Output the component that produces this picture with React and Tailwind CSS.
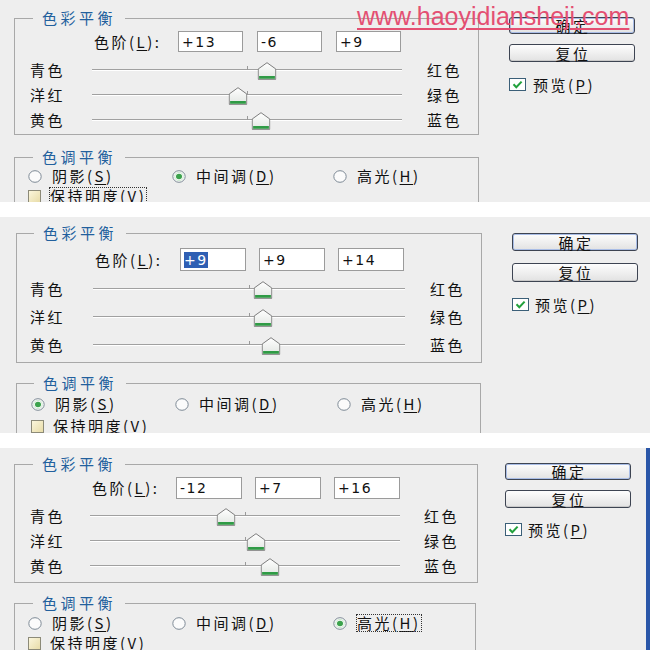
import React from "react";

const P1 = {
  h: "h-[202px]",
  colW: "w-[482px]",
  colPl: "pl-[14px]",
  g1: "mt-[10px] w-[465px] pb-[2px]",
  lgMl: "ml-[18px]",
  lvl: "mt-[5px] pl-[79px]",
  lblW: "w-[84px]",
  inCls: "w-[65px] h-[21px]",
  inGap: "gap-[14px]",
  rows: "mt-[5px]",
  rowH: "h-[25px]",
  rowPl: "pl-[15px]",
  lw: "w-[62px]",
  tw: "w-[310px]",
  rml: "ml-[25px]",
  g2: "mt-[14px] w-[465px]",
  radioH: "h-[22px]",
  radioPl: "pl-[13px]",
  r1w: "w-[144px]",
  r2w: "w-[161px]",
  keep: "mt-[1px]",
  btnPl: "pl-[27px]",
  b1: "mt-[17px] h-[17px]",
  b2: "mt-[10px] h-[18px]",
  pv: "mt-[16px]",
  pvMl: "ml-[7px]",
};

const P2 = {
  h: "h-[216px]",
  colW: "w-[484px]",
  colPl: "pl-[16px]",
  g1: "mt-[8px] w-[466px] pb-[3px]",
  lgMl: "ml-[17px]",
  lvl: "mt-[7px] pl-[78px]",
  lblW: "w-[85px]",
  inCls: "w-[66px] h-[23px]",
  inGap: "gap-[13px]",
  rows: "mt-[4px]",
  rowH: "h-[28px]",
  rowPl: "pl-[13px]",
  lw: "w-[63px]",
  tw: "w-[312px]",
  rml: "ml-[25px]",
  g2: "mt-[12px] w-[465px]",
  radioH: "h-[26px]",
  radioPl: "pl-[14px]",
  r1w: "w-[144px]",
  r2w: "w-[162px]",
  keep: "mt-[1px]",
  btnPl: "pl-[28px]",
  b1: "mt-[16px] h-[18px]",
  b2: "mt-[12px] h-[19px]",
  pv: "mt-[16px]",
  pvMl: "ml-[6px]",
};

const P3 = {
  h: "h-[202px]",
  colW: "w-[482px]",
  colPl: "pl-[14px]",
  g1: "mt-[8px] w-[464px] pb-[4px]",
  lgMl: "ml-[18px]",
  lvl: "mt-[5px] pl-[77px]",
  lblW: "w-[84px]",
  inCls: "w-[66px] h-[22px]",
  inGap: "gap-[13px]",
  rows: "mt-[4px]",
  rowH: "h-[25px]",
  rowPl: "pl-[15px]",
  lw: "w-[60px]",
  tw: "w-[310px]",
  rml: "ml-[24px]",
  g2: "mt-[12px] w-[462px]",
  radioH: "h-[24px]",
  radioPl: "pl-[13px]",
  r1w: "w-[144px]",
  r2w: "w-[161px]",
  keep: "mt-[0px]",
  btnPl: "pl-[23px]",
  b1: "mt-[15px] h-[17px]",
  b2: "mt-[10px] h-[18px]",
  pv: "mt-[15px]",
  pvMl: "ml-[6px]",
};

function U({ c }) {
  return <span className="underline decoration-1 underline-offset-[2px]">{c}</span>;
}

function Thumb() {
  return (
    <svg width="19" height="18" viewBox="0 0 19 18">
      <defs>
        <linearGradient id="thumbg" x1="0" y1="0" x2="0" y2="1">
          <stop offset="0" stopColor="#ffffff" />
          <stop offset="1" stopColor="#e2e6e2" />
        </linearGradient>
      </defs>
      <path d="M9.5 0.7 L18.3 7 L18.3 17.3 L0.7 17.3 L0.7 7 Z" fill="url(#thumbg)" stroke="#7d7d7d" strokeWidth="1" />
      <path d="M1.6 15.4 H17.4" stroke="#2f9b45" strokeWidth="2.6" />
    </svg>
  );
}

function Radio({ checked }) {
  return (
    <svg width="14" height="13" viewBox="0 0 14 13" className="shrink-0">
      <ellipse cx="7" cy="6.5" rx="6.2" ry="5.8" fill="#fbfbfb" stroke="#7e8a96" strokeWidth="1" />
      {checked && <ellipse cx="7" cy="6.5" rx="3" ry="2.8" fill="#3ba24c" />}
      {checked && <ellipse cx="7" cy="6.5" rx="4.2" ry="4" fill="none" stroke="#bfe3c4" strokeWidth="0.8" />}
    </svg>
  );
}

function Check() {
  return (
    <svg width="17" height="13" viewBox="0 0 17 13" className="shrink-0">
      <rect x="0.5" y="0.5" width="16" height="12" fill="#ffffff" stroke="#3b5f78" />
      <path d="M4.5 6.3 L7.3 9.2 L12.6 3.6" fill="none" stroke="#22a13c" strokeWidth="2" />
    </svg>
  );
}

function Field({ v, cls, sel }) {
  return (
    <div
      className={`${cls} bg-white border border-[#9b9b9b] flex items-center pl-[3px] font-['DejaVu_Sans',sans-serif] text-[14px] leading-[16px] tracking-[1.5px] text-[#111111]`}
    >
      {sel ? <span className="bg-[#2f5fb3] text-white">{v}</span> : v}
    </div>
  );
}

function Btn({ children, cls, def }) {
  return (
    <div
      className={`${cls} w-[126px] shrink-0 rounded-[3px] border border-[#3d4452] bg-linear-to-b from-[#fdfdfd] to-[#e2e2e2] flex items-center justify-center text-[15px] leading-none tracking-[2.5px] pl-[2px] ${
        def ? "shadow-[inset_0_0_0_1px_#a9bde6]" : "shadow-[inset_0_-1px_0_#c9c9c9]"
      }`}
    >
      {children}
    </div>
  );
}

function SliderRow({ c, left, right, value }) {
  const pct = ((value + 100) / 200) * 100;
  return (
    <div className={`flex items-center ${c.rowH} ${c.rowPl}`}>
      <div className={`${c.lw} shrink-0 text-[15px] leading-[16px] tracking-[2.5px]`}>{left}</div>
      <div className={`${c.tw} shrink-0 relative h-[2px] border-t border-t-[#a0a0a0] border-b border-b-white`}>
        <div className="absolute left-1/2 top-[-4px] w-px h-[4px] bg-[#9a9a9a]" />
        <div className="absolute top-[-8px] -translate-x-1/2 flex" style={{ left: `${pct}%` }}>
          <Thumb />
        </div>
      </div>
      <div className={`${c.rml} text-[15px] leading-[16px] tracking-[2.5px]`}>{right}</div>
    </div>
  );
}

function RadioItem({ w, checked, focus, children }) {
  return (
    <div className={`flex items-center ${w}`}>
      <Radio checked={checked} />
      <span
        className={`ml-[10px] text-[15px] leading-[16px] tracking-[2.5px] ${
          focus ? "outline outline-1 outline-dotted outline-[#333333]" : ""
        }`}
      >
        {children}
      </span>
    </div>
  );
}

function Panel({ c, vals, mode, selFirst, focusKeep, focusHigh, strip }) {
  const nums = vals.map((v) => parseInt(v, 10));
  return (
    <div className={`flex ${c.h} shrink-0 overflow-hidden bg-[#eeeeee]`}>
      <div className={`${c.colW} ${c.colPl} shrink-0 flex flex-col`}>
        <fieldset className={`${c.g1} shrink-0 border border-[#a8a8a8]`}>
          <legend className={`${c.lgMl} px-[9px] h-[16px] leading-[16px] text-[15px] tracking-[3.5px] text-[#22609d]`}>
            色彩平衡
          </legend>
          <div className={`flex items-center ${c.lvl}`}>
            <div className={`${c.lblW} shrink-0 text-[15px] leading-[16px] tracking-[2.5px]`}>
              色阶(<U c="L" />):
            </div>
            <div className={`flex ${c.inGap}`}>
              {vals.map((v, i) => (
                <Field key={i} v={v} cls={c.inCls} sel={selFirst && i === 0} />
              ))}
            </div>
          </div>
          <div className={`flex flex-col ${c.rows}`}>
            <SliderRow c={c} left="青色" right="红色" value={nums[0]} />
            <SliderRow c={c} left="洋红" right="绿色" value={nums[1]} />
            <SliderRow c={c} left="黄色" right="蓝色" value={nums[2]} />
          </div>
        </fieldset>
        <fieldset className={`${c.g2} h-[120px] shrink-0 border border-[#a8a8a8]`}>
          <legend className={`${c.lgMl} px-[9px] h-[16px] leading-[16px] text-[15px] tracking-[3.5px] text-[#22609d]`}>
            色调平衡
          </legend>
          <div className={`flex items-center ${c.radioH} ${c.radioPl}`}>
            <RadioItem w={c.r1w} checked={mode === "S"}>
              阴影(<U c="S" />)
            </RadioItem>
            <RadioItem w={c.r2w} checked={mode === "D"}>
              中间调(<U c="D" />)
            </RadioItem>
            <RadioItem w="" checked={mode === "H"} focus={focusHigh}>
              高光(<U c="H" />)
            </RadioItem>
          </div>
          <div className={`flex items-center h-[16px] ${c.keep} ${c.radioPl}`}>
            <div className="w-[13px] h-[13px] shrink-0 border border-[#8c8a78] bg-linear-to-br from-[#fbf6dc] to-[#e8dca8]" />
            <span
              className={`ml-[9px] text-[15px] leading-[16px] tracking-[2.5px] ${
                focusKeep ? "outline outline-1 outline-dotted outline-[#333333]" : ""
              }`}
            >
              保持明度(<U c="V" />)
            </span>
          </div>
        </fieldset>
      </div>
      <div className={`flex-1 flex flex-col ${c.btnPl}`}>
        <Btn cls={c.b1} def>
          确定
        </Btn>
        <Btn cls={c.b2}>复位</Btn>
        <div className={`flex items-center h-[13px] ${c.pv}`}>
          <Check />
          <span className={`${c.pvMl} text-[15px] leading-[16px] tracking-[2.5px]`}>
            预览(<U c="P" />)
          </span>
        </div>
      </div>
      {strip && <div className="w-[4px] shrink-0 bg-[#2a56a8]" />}
    </div>
  );
}

export default function App() {
  return (
    <div className="relative w-[650px] h-[650px] overflow-hidden bg-white flex flex-col gap-[15px] font-['Noto_Sans_CJK_SC',sans-serif] text-[#111111]">
      <Panel c={P1} vals={["+13", "-6", "+9"]} mode="D" focusKeep />
      <Panel c={P2} vals={["+9", "+9", "+14"]} mode="S" selFirst />
      <Panel c={P3} vals={["-12", "+7", "+16"]} mode="H" focusHigh strip />
      <div className="absolute left-[357px] top-[4px] text-[25px] leading-[25px] font-['Liberation_Sans',sans-serif] text-[#e44f72] underline decoration-[1.5px] underline-offset-[3px]">
        www.haoyidiansheji.com
      </div>
    </div>
  );
}
